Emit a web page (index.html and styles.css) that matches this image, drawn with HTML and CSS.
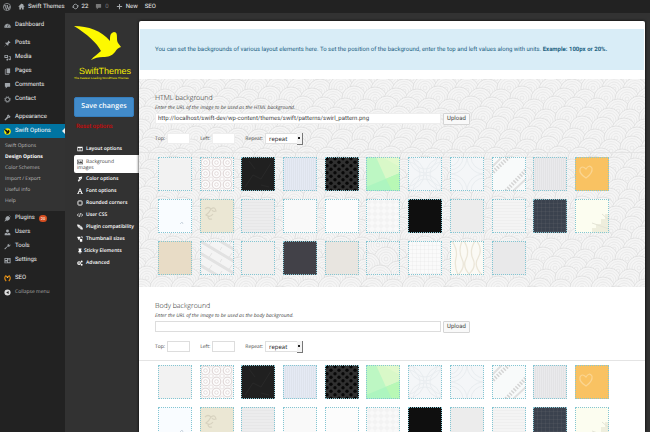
FILE: index.html
```html
<!DOCTYPE html>
<html lang="en">
<head>
<meta charset="utf-8">
<title>Swift Options - Design Options</title>
<link rel="stylesheet" href="styles.css">
</head>
<body>
<svg class="sprite" aria-hidden="true">
  <defs>
    <symbol id="i-wp" viewBox="0 0 16 16"><circle cx="8" cy="8" r="7.2" fill="none" stroke="currentColor" stroke-width="1.4"/><path d="M2.6 5.2h3M3.8 5.2 7 13l1.8-5L7.600 5.200H10M8.600 5.200 11.400 13l2-6.500" fill="none" stroke="currentColor" stroke-width="1.700"/></symbol>
    <symbol id="i-home" viewBox="0 0 16 16"><path d="M8 1 1 8l1 1 1-1v7h4v-4h2v4h4V8l1 1 1-1-3-3V2h-2v1z" fill="currentColor"/></symbol>
    <symbol id="i-update" viewBox="0 0 16 16"><path d="M3 10a5.300 5.300 0 0 1 8-6.200M13 6a5.300 5.300 0 0 1-8 6.200" fill="none" stroke="currentColor" stroke-width="2"/><path d="M0 8.500h6L3 12zM10 7.500h6L13 4z" fill="currentColor"/></symbol>
    <symbol id="i-comment" viewBox="0 0 16 16"><path d="M3 2h10q1 0 1 1v7q0 1-1 1H8l-4 4v-4H3q-1 0-1-1V3q0-1 1-1z" fill="currentColor"/></symbol>
    <symbol id="i-plus" viewBox="0 0 16 16"><path d="M8 2v12M2 8h12" stroke="currentColor" stroke-width="2.400"/></symbol>
    <symbol id="i-dash" viewBox="0 0 16 16"><path d="M1 13a7.200 7.200 0 1 1 14 0z" fill="currentColor"/><path d="M8 11 10 5M3.500 9.500h1M11.500 9.500h1M5 6l.8.8" stroke="#222" stroke-width="1.500"/></symbol>
    <symbol id="i-pin" viewBox="0 0 16 16"><path d="m10 1 5 5-1.500 1-1-.3-2.500 2.500.2 3L9 13.400 6 10.500 1.500 15 1 14.500 5.500 10 2.600 7 4 5.800l3 .2L9.400 3.500 9 2z" fill="currentColor"/></symbol>
    <symbol id="i-media" viewBox="0 0 16 16"><path d="M1 2h8v7H1zM3 4v3h4V4z" fill="currentColor" fill-rule="evenodd"/><path d="M10.500 6H15v6M9 10v3.500" fill="none" stroke="currentColor" stroke-width="1.800"/><circle cx="7.500" cy="13" r="2" fill="currentColor"/><circle cx="13.500" cy="12" r="2" fill="currentColor"/></symbol>
    <symbol id="i-pages" viewBox="0 0 16 16"><path d="M6 1h8v11H6z" fill="currentColor"/><path d="M4.500 3.500H3v11h8v-1.500" fill="none" stroke="currentColor" stroke-width="1.600"/></symbol>
    <symbol id="i-gear" viewBox="0 0 16 16"><circle cx="8" cy="8" r="4.600" fill="none" stroke="currentColor" stroke-width="2.200"/><circle cx="8" cy="8" r="6.600" fill="none" stroke="currentColor" stroke-width="2" stroke-dasharray="2.200 2.984"/></symbol>
    <symbol id="i-brush" viewBox="0 0 16 16"><path d="m7 3 3-2 5 5-2.500 3L9.500 9 3 15l-2-2 6-6.500z" fill="currentColor"/><path d="M8 4.500 12 8" stroke="#222" stroke-width="1.200"/></symbol>
    <symbol id="i-swift" viewBox="0 0 16 16"><circle cx="8" cy="8" r="7.500" fill="#f4e800"/><path d="M0 2q7 1 8 5l2-3 3 3-2 5-6 2 1-3Q3 7 0 2z" fill="#111"/></symbol>
    <symbol id="i-plug" viewBox="0 0 16 16"><path d="m9 2 5 5-2 4-4 2-3-.5L2 15l-1-1 2.500-3L3 8l2-4z" fill="currentColor"/><path d="m9.500 4 3-3M12 6.500l3-3" stroke="currentColor" stroke-width="1.700"/></symbol>
    <symbol id="i-user" viewBox="0 0 16 16"><circle cx="8" cy="4.500" r="3.300" fill="currentColor"/><path d="M1.500 14v-3q0-2 4-2.500L8 11l2.500-2.500q4 .5 4 2.500v3z" fill="currentColor"/></symbol>
    <symbol id="i-tool" viewBox="0 0 16 16"><path d="M13 1.500 10.500 4l1.500 1.500L14.500 3q1.200 5-3.500 5.500L8.500 8 3 14.500q-2 0-2-2L8 7Q7 1.500 13 1.500z" fill="currentColor"/></symbol>
    <symbol id="i-settings" viewBox="0 0 16 16"><path d="M1 2h14v12H1zM3 4v3h4V4zM9 4v1.500h4V4zM3 9v1h4V9zM9 7.500V12h4V7.500zM3 11.500v1h4v-1z" fill="currentColor" fill-rule="evenodd"/></symbol>
    <symbol id="i-seo" viewBox="0 0 16 16"><path d="M5 14Q-1 7 4 2l4 3 4-3q5 5-1 12" fill="none" stroke="#e08a12" stroke-width="2.600"/><circle cx="8" cy="5.500" r="1.500" fill="#f7c85c"/></symbol>
    <symbol id="i-collapse" viewBox="0 0 16 16"><circle cx="8" cy="8" r="7" fill="currentColor"/><path d="M10.500 4.500v7L5 8z" fill="#222"/></symbol>
    <symbol id="i-columns" viewBox="0 0 16 16"><path d="M1 2h14v12H1zM3 5v7h4V5zM9 5v7h4V5z" fill="currentColor" fill-rule="evenodd"/></symbol>
    <symbol id="i-image" viewBox="0 0 16 16"><path d="M0 2h16v12H0zM1.500 3.500v9h13v-9z" fill="currentColor" fill-rule="evenodd"/><circle cx="4.500" cy="6" r="1.500" fill="currentColor"/><path d="M2.500 11.500v-1.500L5 8l1.500 1.500L10.500 5.500l3 3v3z" fill="currentColor"/></symbol>
    <symbol id="i-magic" viewBox="0 0 16 16"><path d="M4 3 14 1l-1.500 6-8 8L2 12l4-5z" fill="currentColor"/><path d="m5 12 6-7" stroke="#333" stroke-width="1"/></symbol>
    <symbol id="i-font" viewBox="0 0 16 16"><path d="M7 1h2.500l4.500 12h1.500v2h-6v-2h1.500l-.8-2.500H5.500L4.700 13H6v2H.5v-2H2zM6.200 8.500h3.300L8 4z" fill="currentColor" fill-rule="evenodd"/></symbol>
    <symbol id="i-round" viewBox="0 0 16 16"><rect x="2.500" y="2.500" width="11" height="11" rx="2" fill="none" stroke="currentColor" stroke-width="2.400"/></symbol>
    <symbol id="i-code" viewBox="0 0 16 16"><path d="M4.500 4 1 8l3.500 4M11.500 4 15 8l-3.500 4M9.500 3l-3 10" fill="none" stroke="currentColor" stroke-width="2"/></symbol>
    <symbol id="i-sync" viewBox="0 0 16 16"><path d="M2 1v5h9v8M14 15v-5H5V2" fill="none" stroke="currentColor" stroke-width="2.400"/><path d="M8 11h6l-3 4zM2 5h6L5 1z" fill="currentColor"/></symbol>
    <symbol id="i-thumb" viewBox="0 0 16 16"><path d="M1 2h8v5H6v3H3V6H1zM7 8h7v7H8v-3H7z" fill="currentColor"/><path d="M11 2h3v4" fill="none" stroke="currentColor" stroke-width="2"/></symbol>
    <symbol id="i-tack" viewBox="0 0 16 16"><path d="M4 1h8v2l-1 1v3l2 3v1H9v4H7v-4H3v-1l2-3V4L4 3z" fill="currentColor"/></symbol>
    <symbol id="i-cogs" viewBox="0 0 16 16"><circle cx="5.500" cy="8" r="3.500" fill="none" stroke="currentColor" stroke-width="3"/><circle cx="12.500" cy="4" r="2.500" fill="currentColor"/><circle cx="12.500" cy="12.500" r="2.500" fill="currentColor"/></symbol>

    <g id="scale"><circle r="12" fill="#f5f5f5" stroke="#dadada" stroke-width=".7"/><circle r="9.500" fill="none" stroke="#e8e8e8" stroke-width=".8"/><circle r="7" fill="none" stroke="#e4e4e4" stroke-width=".8"/><circle r="4.500" fill="none" stroke="#e8e8e8" stroke-width=".8"/><circle r="2" fill="none" stroke="#e4e4e4" stroke-width=".8"/></g>
    <pattern id="swirl" width="84" height="80" patternUnits="userSpaceOnUse"></pattern>

    <pattern id="p-octo" width="11" height="11" patternUnits="userSpaceOnUse"><g fill="none" stroke="#e2dada"><circle cx="5.500" cy="5.500" r="4.300" stroke-width="1.300"/><circle cx="5.500" cy="5.500" r="1.800"/><path d="M0 2.500 2.500 0M8.500 0 11 2.500M0 8.500 2.500 11M8.500 11 11 8.500"/></g></pattern>
    <pattern id="p-vline" width="2" height="2" patternUnits="userSpaceOnUse"><path d="M.5 0v2" stroke="#000" stroke-opacity=".03"/></pattern>
    <pattern id="p-hline" width="2" height="3" patternUnits="userSpaceOnUse"><path d="M0 .5h2" stroke="#000" stroke-opacity=".02"/></pattern>
    <pattern id="p-grid" width="4" height="4" patternUnits="userSpaceOnUse"><path d="M.5 0v4M0 .5h4" stroke="#888" stroke-opacity=".12"/></pattern>
    <pattern id="p-dots" width="8" height="7" patternUnits="userSpaceOnUse"><rect width="8" height="7" fill="#303030"/><g fill="#080808"><circle cx="2" cy="1.700" r="1.700"/><circle cx="6" cy="5.200" r="1.700"/></g></pattern>
    <pattern id="p-check" width="6" height="6" patternUnits="userSpaceOnUse"><path d="M0 3 3 0l3 3-3 3z" fill="#f3f3f3"/></pattern>
    <pattern id="p-bars" width="20" height="12" patternUnits="userSpaceOnUse"><path d="M0 0 20 12M-10 6 10 18M10-6 30 6" stroke="#e2e2e2" stroke-width="3"/><path d="M12 0 8 6M2 6-2 12" stroke="#e2e2e2"/></pattern>

    <symbol id="s-paper" viewBox="0 0 34 34"><rect width="34" height="34" fill="#f2f2f2"/></symbol>
    <symbol id="s-octagons" viewBox="0 0 34 34"><rect width="34" height="34" fill="#fdfdfd"/><rect width="34" height="34" fill="url(#p-octo)"/></symbol>
    <symbol id="s-leather" viewBox="0 0 34 34"><rect width="34" height="34" fill="#202020"/><path d="m4 30 8-12 8 4 10-16M8 4l6 8M20 28l8 2" stroke="#292929" fill="none"/></symbol>
    <symbol id="s-pinstripe" viewBox="0 0 34 34"><rect width="34" height="34" fill="#e5eaf4"/><rect width="34" height="34" fill="url(#p-vline)"/></symbol>
    <symbol id="s-carbon" viewBox="0 0 34 34"><rect width="34" height="34" fill="url(#p-dots)"/></symbol>
    <symbol id="s-facets" viewBox="0 0 34 34"><rect width="34" height="34" fill="#bdf7c3"/><path d="M10 0h24v16L20 22z" fill="#d9f8c8"/><path d="M16 0h18v10z" fill="#e2f9cd"/><path d="M0 30 34 16v18H0z" fill="#adf5bf"/><path d="m20 22 14-6v18h-8z" fill="#b8f8b5"/></symbol>
    <symbol id="s-rings" viewBox="0 0 34 34"><rect width="34" height="34" fill="#f4f6f8"/><g fill="none" stroke="#e9edf0"><circle cx="17" cy="0" r="16"/><circle cx="17" cy="0" r="12"/><circle cx="17" cy="34" r="16"/><circle cx="17" cy="34" r="12"/><circle cx="0" cy="17" r="16"/><circle cx="0" cy="17" r="12"/><circle cx="34" cy="17" r="16"/><circle cx="34" cy="17" r="12"/></g></symbol>
    <symbol id="s-star" viewBox="0 0 34 34"><rect width="34" height="34" fill="#f4f6f8"/><g fill="none" stroke="#e9edf0"><circle r="17"/><circle r="13"/><circle r="9"/><circle cx="34" r="17"/><circle cx="34" r="13"/><circle cy="34" r="17"/><circle cy="34" r="13"/><circle cx="34" cy="34" r="17"/><circle cx="34" cy="34" r="13"/></g></symbol>
    <symbol id="s-ribbon" viewBox="0 0 34 34"><rect width="34" height="34" fill="#f8fafa"/><path d="M1 15 17 0M14 34 34 13" stroke="#d4d4d4" stroke-width="4" stroke-dasharray="1.500 1.500"/><path d="M0 10 10 0M21 34l13-12" stroke="#e0e0e0" stroke-width="2"/></symbol>
    <symbol id="s-weave" viewBox="0 0 34 34"><rect width="34" height="34" fill="#eaeaec"/><rect width="34" height="34" fill="url(#p-vline)"/></symbol>
    <symbol id="s-heart" viewBox="0 0 34 34"><rect width="34" height="34" fill="#f9c262"/><path d="M11 21q-7-4-6-9 2-4 6 0 3-5 6-1 1 5-6 10z" fill="none" stroke="#fbd591" stroke-width="1.200"/></symbol>
    <symbol id="s-mist" viewBox="0 0 34 34"><rect width="34" height="34" fill="#f9fcff"/><path d="m22 25 2-2 1 2" stroke="#ccd6e0" fill="none"/></symbol>
    <symbol id="s-floral" viewBox="0 0 34 34"><rect width="34" height="34" fill="#ebe7d4"/><path d="M5 10q3-3 6 0-2 4-5 6 4 3 7-1M11 10q4-3 5 2-3 1-4-1M8 17q0 4 4 3" fill="none" stroke="#d7d2bf" stroke-width="1.200"/></symbol>
    <symbol id="s-lines" viewBox="0 0 34 34"><rect width="34" height="34" fill="#ececed"/><rect width="34" height="34" fill="url(#p-hline)"/></symbol>
    <symbol id="s-snow" viewBox="0 0 34 34"><rect width="34" height="34" fill="#f9f9f9"/></symbol>
    <symbol id="s-white" viewBox="0 0 34 34"><rect width="34" height="34" fill="#fcfcfc"/></symbol>
    <symbol id="s-checker" viewBox="0 0 34 34"><rect width="34" height="34" fill="#f9f9f9"/><rect width="34" height="34" fill="url(#p-check)"/></symbol>
    <symbol id="s-black" viewBox="0 0 34 34"><rect width="34" height="34" fill="#0f0f0f"/></symbol>
    <symbol id="s-silver" viewBox="0 0 34 34"><rect width="34" height="34" fill="#ececec"/></symbol>
    <symbol id="s-ruled" viewBox="0 0 34 34"><rect width="34" height="34" fill="#f4f4f4"/><rect width="34" height="34" fill="url(#p-hline)"/></symbol>
    <symbol id="s-denim" viewBox="0 0 34 34"><rect width="34" height="34" fill="#3b424e"/><rect width="34" height="34" fill="url(#p-grid)"/></symbol>
    <symbol id="s-steps" viewBox="0 0 34 34"><rect width="34" height="34" fill="#fcfdf0"/><path d="M17 34v-5h4v-4h5v-5h4v-5h4v19z" fill="#eeeedd"/><path d="m17 24 17 6M27 15l7 6" stroke="#e4e4d6"/></symbol>
    <symbol id="s-sand" viewBox="0 0 34 34"><rect width="34" height="34" fill="#e8dcc6"/></symbol>
    <symbol id="s-planks" viewBox="0 0 34 34"><rect width="34" height="34" fill="#f4f4f4"/><rect width="34" height="34" fill="url(#p-bars)"/></symbol>
    <symbol id="s-linen" viewBox="0 0 34 34"><rect width="34" height="34" fill="#f0efee"/></symbol>
    <symbol id="s-slate" viewBox="0 0 34 34"><rect width="34" height="34" fill="#424148"/></symbol>
    <symbol id="s-stone" viewBox="0 0 34 34"><rect width="34" height="34" fill="#e8e5e0"/></symbol>
    <symbol id="s-swirl" viewBox="0 0 34 34"><rect width="34" height="34" fill="#f5f5f5"/><use href="#scale" x="12" y="4"/><use href="#scale" x="33" y="8"/><use href="#scale" x="20" y="18"/><use href="#scale" x="2" y="24"/><use href="#scale" x="32" y="32"/><use href="#scale" x="14" y="36"/></symbol>
    <symbol id="s-graph" viewBox="0 0 34 34"><rect width="34" height="34" fill="#fafafa"/><rect width="34" height="34" fill="url(#p-grid)" opacity=".4"/></symbol>
    <symbol id="s-branches" viewBox="0 0 34 34"><rect width="34" height="34" fill="#fbfaf5"/><path d="M2 0q6 9 4 17t2 17M12 0q-4 10 0 18t-4 16M14 0q6 10 2 18t4 16M25 0q-6 10-2 18t-5 16M27 0q6 9 1 17t4 17" fill="none" stroke="#ebe6d8" stroke-width="1.300"/></symbol>
    <symbol id="s-concrete" viewBox="0 0 34 34"><rect width="34" height="34" fill="#e9e9ea"/></symbol>
  </defs>
</svg>

<header class="adminbar">
  <a href="#" aria-label="About WordPress"><svg class="icon logo-wp"><use href="#i-wp"/></svg></a>
  <a href="#"><svg class="icon"><use href="#i-home"/></svg>Swift Themes</a>
  <a href="#"><svg class="icon"><use href="#i-update"/></svg>22</a>
  <a href="#" class="dim"><svg class="icon"><use href="#i-comment"/></svg>0</a>
  <a href="#"><svg class="icon"><use href="#i-plus"/></svg>New</a>
  <a href="#">SEO</a>
</header>

<div class="layout">
  <nav class="menu" aria-label="Admin menu">
    <a href="#" class="item"><svg class="icon"><use href="#i-dash"/></svg>Dashboard</a>
    <div class="group">
      <a href="#" class="item"><svg class="icon"><use href="#i-pin"/></svg>Posts</a>
      <a href="#" class="item"><svg class="icon"><use href="#i-media"/></svg>Media</a>
      <a href="#" class="item"><svg class="icon"><use href="#i-pages"/></svg>Pages</a>
      <a href="#" class="item"><svg class="icon"><use href="#i-comment"/></svg>Comments</a>
      <a href="#" class="item"><svg class="icon"><use href="#i-gear"/></svg>Contact</a>
    </div>
    <div class="group">
      <a href="#" class="item"><svg class="icon"><use href="#i-brush"/></svg>Appearance</a>
      <a href="#" class="item current"><svg class="icon"><use href="#i-swift"/></svg>Swift Options</a>
      <div class="submenu">
        <a href="#">Swift Options</a>
        <a href="#" class="active">Design Options</a>
        <a href="#">Color Schemes</a>
        <a href="#">Import / Export</a>
        <a href="#">Useful info</a>
        <a href="#">Help</a>
      </div>
      <a href="#" class="item"><svg class="icon"><use href="#i-plug"/></svg>Plugins <span class="badge">20</span></a>
      <a href="#" class="item"><svg class="icon"><use href="#i-user"/></svg>Users</a>
      <a href="#" class="item"><svg class="icon"><use href="#i-tool"/></svg>Tools</a>
      <a href="#" class="item"><svg class="icon"><use href="#i-settings"/></svg>Settings</a>
    </div>
    <div class="group">
      <a href="#" class="item"><svg class="icon"><use href="#i-seo"/></svg>SEO</a>
      <button type="button" class="item collapse"><svg class="icon"><use href="#i-collapse"/></svg>Collapse menu</button>
    </div>
  </nav>

  <aside class="options">
    <div class="brand">
      <svg class="bird" viewBox="0 0 48 36" aria-hidden="true"><path d="M0 1C14 1 28 6 36 16C36 11 36 8 40 7C43 7 43 10 43 13C43 15 43 16 44 18L47 22C44 23 43 24 41 27C38 31 34 32 29 32C24 32 21 33 17 35C20 31 24 29 27 26C23 18 13 9 0 1Z" fill="#fdf900"/></svg>
      <div class="name">SwiftThemes</div>
      <div class="tagline">The Fastest Loading WordPress Themes</div>
    </div>
    <button type="button" class="save">Save changes</button>
    <a href="#" class="reset">Reset options</a>
    <nav class="tabs" aria-label="Design options">
      <a href="#"><svg class="icon"><use href="#i-columns"/></svg>Layout options</a>
      <a href="#" class="active"><svg class="icon"><use href="#i-image"/></svg>Background images</a>
      <a href="#"><svg class="icon"><use href="#i-magic"/></svg>Color options</a>
      <a href="#"><svg class="icon"><use href="#i-font"/></svg>Font options</a>
      <a href="#"><svg class="icon"><use href="#i-round"/></svg>Rounded corners</a>
      <a href="#"><svg class="icon"><use href="#i-code"/></svg>User CSS</a>
      <a href="#"><svg class="icon"><use href="#i-sync"/></svg>Plugin compatibility</a>
      <a href="#"><svg class="icon"><use href="#i-thumb"/></svg>Thumbnail sizes</a>
      <a href="#" class="tight"><svg class="icon"><use href="#i-tack"/></svg>Sticky Elements</a>
      <a href="#"><svg class="icon"><use href="#i-cogs"/></svg>Advanced</a>
    </nav>
  </aside>

  <main class="panel">
    <p class="notice">You can set the backgrounds of various layout elements here. To set the position of the background, enter the top and left values along with units. <strong>Example: 100px or 20%.</strong></p>

    <section class="setting patterned">
      <svg class="backdrop" aria-hidden="true"><rect width="100%" height="100%" fill="#f3f3f3"/><rect width="100%" height="100%" fill="url(#swirl)"/></svg>
      <div class="fields">
        <h2>HTML background</h2>
        <label class="hint" for="html-url">Enter the URL of the image to be used as the HTML background.</label>
        <div class="url-row">
          <input type="text" id="html-url" value="http://localhost/swift-dev/wp-content/themes/swift/patterns/swirl_pattern.png">
          <button type="button">Upload</button>
        </div>
        <div class="position-row">
          <label>Top: <input type="text"></label>
          <label>Left: <input type="text"></label>
          <label>Repeat: <span class="select"><select><option>repeat</option><option>no-repeat</option><option>repeat-x</option><option>repeat-y</option></select></span></label>
        </div>
      </div>
      <div class="swatches"></div>
    </section>

    <section class="setting">
      <div class="fields">
        <h2>Body background</h2>
        <label class="hint" for="body-url">Enter the URL of the image to be used as the body background.</label>
        <div class="url-row">
          <input type="text" id="body-url">
          <button type="button">Upload</button>
        </div>
        <div class="position-row">
          <label>Top: <input type="text"></label>
          <label>Left: <input type="text"></label>
          <label>Repeat: <span class="select"><select><option>repeat</option><option>no-repeat</option><option>repeat-x</option><option>repeat-y</option></select></span></label>
        </div>
      </div>
      <div class="swatches"></div>
    </section>
  </main>
</div>
<script src="script.js"></script>
</body>
</html>
```
FILE: styles.css
```css
* { box-sizing: border-box; }

body {
  --small: "Open Sans", "Noto Sans", sans-serif;
  margin: 0;
  height: 100vh;
  display: flex;
  flex-direction: column;
  overflow: hidden;
  background: #323232;
  color: #444;
  font: 6px/8px Roboto, "Open Sans", sans-serif;
  text-rendering: geometricPrecision;
}

a { color: inherit; text-decoration: none; }
button, input, select { font: inherit; color: inherit; margin: 0; text-rendering: inherit; }
.sprite { position: absolute; width: 0; height: 0; }
.icon { width: 7px; height: 7px; flex: none; }

/* Admin bar */
.adminbar {
  flex: none;
  display: flex;
  align-items: center;
  gap: 7px;
  height: 13px;
  padding-left: 3px;
  background: #222;
  color: #eee;
}
.adminbar a { display: flex; align-items: center; gap: 3px; }
.adminbar .icon { color: #a5a9ad; }
.adminbar .logo-wp { width: 8px; height: 8px; }
.adminbar .dim, .adminbar .dim .icon { color: #777; }

.layout { flex: 1; display: flex; min-height: 0; }

/* Left menu */
.menu {
  flex: none;
  width: 65px;
  padding-top: 5px;
  background: #222;
  color: #eee;
}
.group { margin-top: 4px; }
.item {
  display: flex;
  align-items: center;
  gap: 4px;
  height: 14px;
  padding: 0 0 0 4px;
}
.item .icon { color: #a0a5aa; }
.item.current { position: relative; background: #0074a2; color: #fff; }
.item.current::after {
  content: "";
  position: absolute;
  right: 0;
  border: 3px solid transparent;
  border-right-color: #f1f1f1;
  border-left-width: 0;
}
.submenu {
  display: flex;
  flex-direction: column;
  padding: 3px 0 4px 5px;
  background: #333;
  color: #bbb;
  font-family: var(--small);
  font-size: 5px;
}
.submenu a { line-height: 11px; }
.submenu .active { color: #fff; font-weight: 700; }
.badge {
  padding: 0 2px;
  border-radius: 4px;
  background: #d54e21;
  color: #fff;
  font-size: 4px;
  line-height: 7px;
}
.collapse { width: 100%; border: 0; background: none; color: #aaa; font-family: var(--small); font-size: 5px; }
.collapse .icon { color: #ddd; }

/* Theme options column */
.options { flex: none; width: 74px; padding: 12px 0 0 9px; color: #fff; }
.brand { color: #f5ef00; font-family: "Liberation Sans", sans-serif; white-space: nowrap; }
.bird { display: block; width: 48px; height: 36px; }
.name { margin-top: 5px; padding-left: 5px; font-size: 9px; line-height: 10px; }
.tagline { font-size: 3px; line-height: 4px; }
.save {
  display: block;
  width: 60px;
  height: 20px;
  margin-top: 17px;
  padding: 0;
  border: 1px solid #357ebd;
  border-radius: 2px;
  background: #428bca;
  color: #fff;
  font-family: var(--small);
  font-size: 7px;
  font-weight: 600;
}
.reset { display: block; margin: 5px 2px 12px; color: #e00000; line-height: 9px; }
.tabs { display: flex; flex-direction: column; font-family: var(--small); font-size: 5px; font-weight: 600; }
.tabs a { padding-left: 3px; line-height: 12px; }
.tabs .icon { width: 6px; height: 6px; margin-right: 3px; vertical-align: middle; }
.tabs .tight .icon { margin-right: 1px; }
.tabs .active {
  padding: 4px 20px 2px 3px;
  border-radius: 2px 0 0 2px;
  background: #fff;
  color: #444;
  font-weight: 400;
  line-height: 6px;
}

/* Settings panel */
.panel {
  flex: 1;
  min-width: 0;
  margin: 8px 5px 0 0;
  padding-top: 8px;
  overflow: auto;
  scrollbar-width: none;
  background: #fff;
  border-radius: 2px 2px 0 0;
  box-shadow: 0 0 3px #000;
}
.notice {
  margin: 0 1px 9px;
  padding: 17px 15px 16px;
  background: #d9edf7;
  color: #20607f;
}
.setting { position: relative; padding-bottom: 12px; }
.backdrop { position: absolute; inset: 0; width: 100%; height: 100%; }
.fields {
  position: relative;
  height: 74px;
  padding: 15px 16px 0;
  border-bottom: 1px solid #e4e4e4;
}
h2 { margin: 0; color: #222; font-family: var(--small); font-size: 7px; font-weight: 300; line-height: 10px; }
.hint { display: block; font-family: var(--small); font-style: italic; font-size: 5px; line-height: 9px; }
.url-row { display: flex; gap: 2px; }
.url-row input { width: 286px; }
input {
  height: 11px;
  padding: 0 2px;
  border: 1px solid #ddd;
  background: #fff;
}
.patterned input { border-color: #eee; }
.url-row button {
  width: 27px;
  height: 12px;
  padding: 0;
  border: 1px solid #d5d5d5;
  border-radius: 1px;
  background: #f9f9f9;
}
.position-row { display: flex; gap: 10px; margin-top: 8px; font-family: var(--small); font-size: 5px; }
.position-row label { display: flex; align-items: center; gap: 2px; }
.position-row input { width: 23px; }
.select { position: relative; display: flex; }
.select::after {
  content: "";
  position: absolute;
  top: 0;
  right: 0;
  width: 5px;
  height: 11px;
  border-right: 1px solid #777;
  border-bottom: 1px solid #777;
  background: linear-gradient(#222, #222) 1px 4px / 2px 2px no-repeat #f4f4f4;
  pointer-events: none;
}
select {
  appearance: none;
  width: 38px;
  height: 11px;
  padding: 0 3px;
  border: 1px solid #e0e0e0;
  border-radius: 0;
  background: #fff;
  color: #222;
  font-size: 6px;
}
.swatches {
  position: relative;
  display: grid;
  grid-template-columns: repeat(11, 34px);
  justify-content: space-between;
  row-gap: 8px;
  padding: 4px 36px 0 19px;
}
.swatch {
  height: 34px;
  padding: 0;
  border: 0;
  outline: 1px dotted #84c6d3;
  outline-offset: -1px;
  background: none;
}
.swatch svg { display: block; width: 100%; height: 100%; }
```
FILE: script.js
```js
const SVG = "http://www.w3.org/2000/svg";

function use(id, attrs = {}) {
  const el = document.createElementNS(SVG, "use");
  el.setAttribute("href", "#" + id);
  for (const key in attrs) el.setAttribute(key, attrs[key]);
  return el;
}

/* Overlapping scales, one row over the last; edges repeat so the tile wraps. */
const shifts = [0, 13, 5, 17, 8, 2, 15, 10];
const tile = document.getElementById("swirl");
for (let row = -1; row <= 9; row++) {
  const r = (row + 8) % 8;
  for (let col = -1; col <= 4; col++) {
    const c = (col + 4) % 4;
    const dy = ((r * 3 + c * 5) % 4) - 1;
    tile.append(use("scale", { x: col * 21 + shifts[r], y: row * 10 + dy }));
  }
}

const patterns = [
  "paper", "octagons", "leather", "pinstripe", "carbon", "facets", "rings", "star", "ribbon", "weave", "heart",
  "mist", "floral", "lines", "snow", "white", "checker", "black", "silver", "ruled", "denim", "steps",
  "sand", "planks", "linen", "slate", "stone", "swirl", "graph", "branches", "concrete"
];

for (const box of document.querySelectorAll(".swatches")) {
  for (const name of patterns) {
    const button = document.createElement("button");
    button.type = "button";
    button.className = "swatch";
    button.setAttribute("aria-label", name);
    const svg = document.createElementNS(SVG, "svg");
    svg.append(use("s-" + name));
    button.append(svg);
    box.append(button);
  }
}
```
